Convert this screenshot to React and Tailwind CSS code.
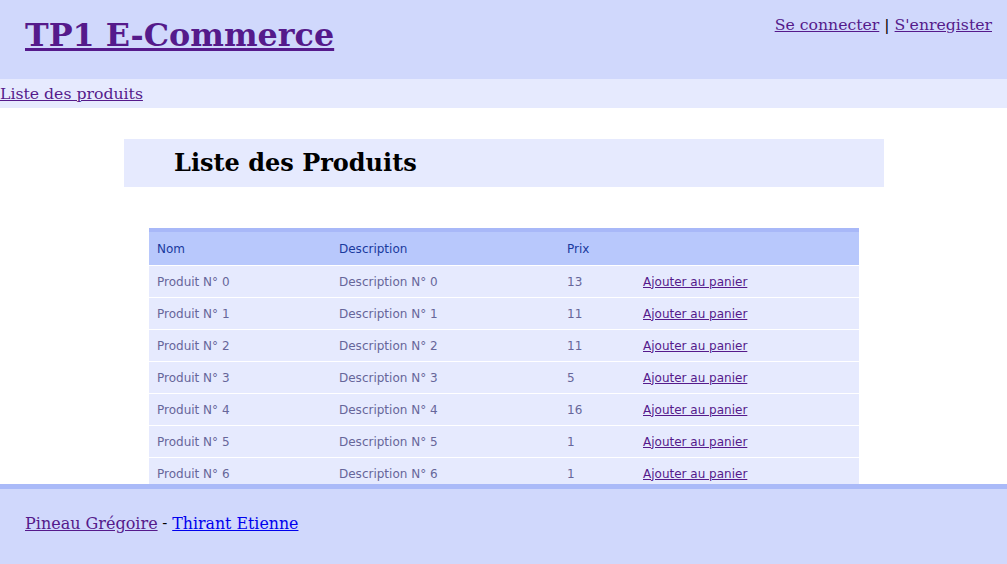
import React from 'react'

const serif = { fontFamily: '"DejaVu Serif", "Liberation Serif", serif' }
const sans = { fontFamily: '"DejaVu Sans", Verdana, sans-serif' }

const produits = [
  { nom: 'Produit N° 0', desc: 'Description N° 0', prix: 13 },
  { nom: 'Produit N° 1', desc: 'Description N° 1', prix: 11 },
  { nom: 'Produit N° 2', desc: 'Description N° 2', prix: 11 },
  { nom: 'Produit N° 3', desc: 'Description N° 3', prix: 5 },
  { nom: 'Produit N° 4', desc: 'Description N° 4', prix: 16 },
  { nom: 'Produit N° 5', desc: 'Description N° 5', prix: 1 },
  { nom: 'Produit N° 6', desc: 'Description N° 6', prix: 1 },
  { nom: 'Produit N° 7', desc: 'Description N° 7', prix: 8 },
]

const cols = 'grid grid-cols-[182px_228px_76px_224px]'

export default function App() {
  return (
    <div className="min-h-screen bg-white text-black" style={serif}>
      {/* Header */}
      <header className="h-[79px] bg-[#d0d8fc] flex justify-between">
        <h1 className="pl-[25px] pt-[15px] text-[31.8px] font-bold leading-[40px]">
          <a href="#" className="text-[#551a8b] underline">TP1 E-Commerce</a>
        </h1>
        <div className="pr-[15px] pt-[14px] text-[15.7px] leading-[22px]">
          <a href="#" className="text-[#551a8b] underline">Se connecter</a>
          {' | '}
          <a href="#" className="text-[#551a8b] underline">S'enregister</a>
        </div>
      </header>

      {/* Nav */}
      <nav className="h-[29px] bg-[#e6eafe] text-[15.7px] leading-[30px]">
        <a href="#" className="text-[#551a8b] underline">Liste des produits</a>
      </nav>

      {/* Content */}
      <main className="pt-[31px] pb-[100px]">
        <div className="ml-[124px] w-[760px] h-[48px] bg-[#e6eafe] flex items-center pl-[50px]">
          <h2 className="text-[24px] font-bold leading-none">Liste des Produits</h2>
        </div>

        <div className="ml-[149px] mt-[41px] w-[710px] border-t-4 border-[#a8b8f8] text-[12px]" style={sans}>
          <div className={`${cols} h-[33px] items-center bg-[#b8c8fc] text-[#1a3a9e]`}>
            <div className="pl-2">Nom</div>
            <div className="pl-2">Description</div>
            <div className="pl-2">Prix</div>
            <div className="pl-2"></div>
          </div>
          {produits.map((p) => (
            <div key={p.nom} className={`${cols} h-[32px] items-center bg-[#e6eafe] border-t border-white text-[#66669a]`}>
              <div className="pl-2">{p.nom}</div>
              <div className="pl-2">{p.desc}</div>
              <div className="pl-2">{p.prix}</div>
              <div className="pl-2">
                <a href="#" className="text-[#551a8b] underline">Ajouter au panier</a>
              </div>
            </div>
          ))}
        </div>
      </main>

      {/* Footer */}
      <footer className="fixed bottom-0 left-0 right-0 h-[80px] bg-[#d0d8fc] border-t-[5px] border-[#aabaf8] flex items-center pl-[25px] pb-[6px] text-[16px]">
        <a href="#" className="text-[#551a8b] underline">Pineau Grégoire</a>
        <span className="whitespace-pre text-[15px]"> - </span>
        <a href="#" className="text-[#0000ee] underline text-[15.8px]">Thirant Etienne</a>
      </footer>
    </div>
  )
}
